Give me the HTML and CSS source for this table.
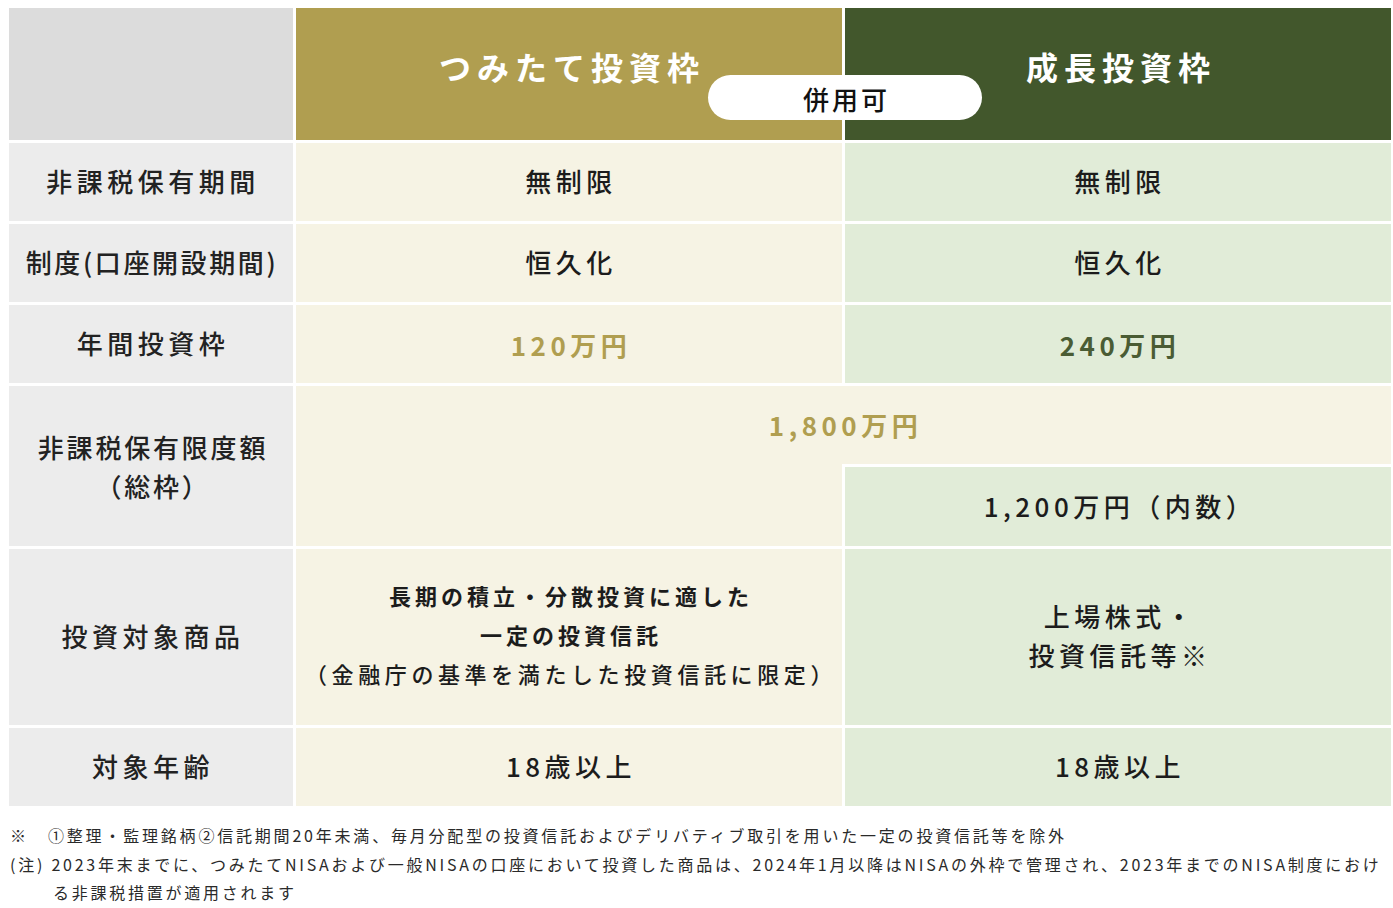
FILE: index.html
```html
<!DOCTYPE html>
<html lang="ja">
<head>
<meta charset="utf-8">
<title>NISA 比較表</title>
<link rel="stylesheet" href="styles.css">
</head>
<body>
<div class="page">
  <div class="table">
    <div class="cell head-blank"></div>
    <div class="cell head head-tsumitate">つみたて投資枠</div>
    <div class="cell head head-growth">成長投資枠</div>
    <div class="pill">併用可</div>

    <div class="cell label">非課税保有期間</div>
    <div class="cell cream">無制限</div>
    <div class="cell green">無制限</div>

    <div class="cell label label-tight">制度(口座開設期間)</div>
    <div class="cell cream">恒久化</div>
    <div class="cell green">恒久化</div>

    <div class="cell label">年間投資枠</div>
    <div class="cell cream amount gold-text">120万円</div>
    <div class="cell green amount green-text">240万円</div>

    <div class="cell label label-total">非課税保有限度額<br>（総枠）</div>
    <div class="cell cream col2-span"></div>
    <div class="cell cream total-top amount gold-text">1,800万円</div>
    <div class="cell green total-sub">1,200万円（内数）</div>

    <div class="cell label">投資対象商品</div>
    <div class="cell cream product">
      <span class="strong">長期の積立・分散投資に適した</span>
      <span class="strong">一定の投資信託</span>
      <span class="note-line">（金融庁の基準を満たした投資信託に限定）</span>
    </div>
    <div class="cell green product-growth">上場株式・<br>投資信託等※</div>

    <div class="cell label">対象年齢</div>
    <div class="cell cream">18歳以上</div>
    <div class="cell green">18歳以上</div>
  </div>

  <div class="notes">
    <p class="note note-mark"><span class="mark">※</span><span>①整理・監理銘柄②信託期間20年未満、毎月分配型の投資信託およびデリバティブ取引を用いた一定の投資信託等を除外</span></p>
    <p class="note note-hang">(注) 2023年末までに、つみたてNISAおよび一般NISAの口座において投資した商品は、2024年1月以降はNISAの外枠で管理され、2023年までのNISA制度における非課税措置が適用されます</p>
  </div>
</div>
</body>
</html>
```

FILE: styles.css
```css
html, body {
  margin: 0;
  padding: 0;
  background: #ffffff;
}

body {
  font-family: "Noto Sans CJK JP", "Noto Sans", sans-serif;
  color: #1c1c1c;
}

.page {
  padding: 8px 2px 0 9px;
}

.table {
  position: relative;
  display: grid;
  grid-template-columns: 284px 546px 546px;
  grid-template-rows: 132px 78px 78px 78px 78px 79px 176px 78px;
  gap: 3px;
  width: 1382px;
}

.cell {
  display: flex;
  align-items: center;
  justify-content: center;
  text-align: center;
  font-size: 26px;
  font-weight: 500;
  letter-spacing: 4.5px;
  line-height: 39px;
  white-space: nowrap;
  padding: 0 0 3px 4px;
  box-sizing: border-box;
}

.head-blank {
  background: #dcdcdc;
}

.head {
  color: #ffffff;
  font-size: 32px;
  font-weight: 700;
  letter-spacing: 6px;
  padding: 0 0 16px 6px;
}

.head-tsumitate {
  background: #b09e50;
}

.head-growth {
  background: #42572c;
}

.pill {
  position: absolute;
  left: 699px;
  top: 67px;
  width: 274px;
  height: 45px;
  border-radius: 23px;
  background: #ffffff;
  display: flex;
  align-items: center;
  justify-content: center;
  font-size: 26px;
  font-weight: 500;
  letter-spacing: 3px;
  color: #111111;
  padding: 2px 0 0 3px;
  box-sizing: border-box;
}

.label {
  background: #ececec;
  color: #222222;
}

.label-tight {
  letter-spacing: 2.6px;
  padding-left: 2px;
}

.cream {
  background: #f6f3e4;
}

.green {
  background: #e1ecd8;
}

.amount {
  font-weight: 700;
  padding-bottom: 0;
}

.gold-text {
  color: #b09e50;
}

.green-text {
  color: #4a5c34;
}

.label-total {
  grid-row: 5 / 7;
  grid-column: 1;
  letter-spacing: 2.8px;
  padding-bottom: 0;
}

.col2-span {
  grid-row: 5 / 7;
  grid-column: 2;
}

.total-top {
  grid-row: 5;
  grid-column: 2 / 4;
  padding-bottom: 1px;
}

.total-sub {
  grid-row: 6;
  grid-column: 3;
}

.product {
  flex-direction: column;
  font-size: 22px;
  letter-spacing: 4px;
  line-height: 39px;
  padding-bottom: 6px;
}

.product .strong {
  font-weight: 700;
}

.product .note-line {
  font-weight: 500;
  letter-spacing: 4.6px;
}

.product-growth {
  padding-bottom: 5px;
}

.notes {
  margin-top: 15px;
  padding-left: 1px;
  width: 1382px;
  box-sizing: border-box;
  color: #2a2a2a;
  font-size: 16px;
  letter-spacing: 2.8px;
  line-height: 28.5px;
}

.note {
  margin: 0;
}

.note-mark {
  display: flex;
}

.mark {
  flex: 0 0 38px;
}

.note-hang {
  letter-spacing: 2.75px;
  padding-left: 43px;
  text-indent: -43px;
}
```
